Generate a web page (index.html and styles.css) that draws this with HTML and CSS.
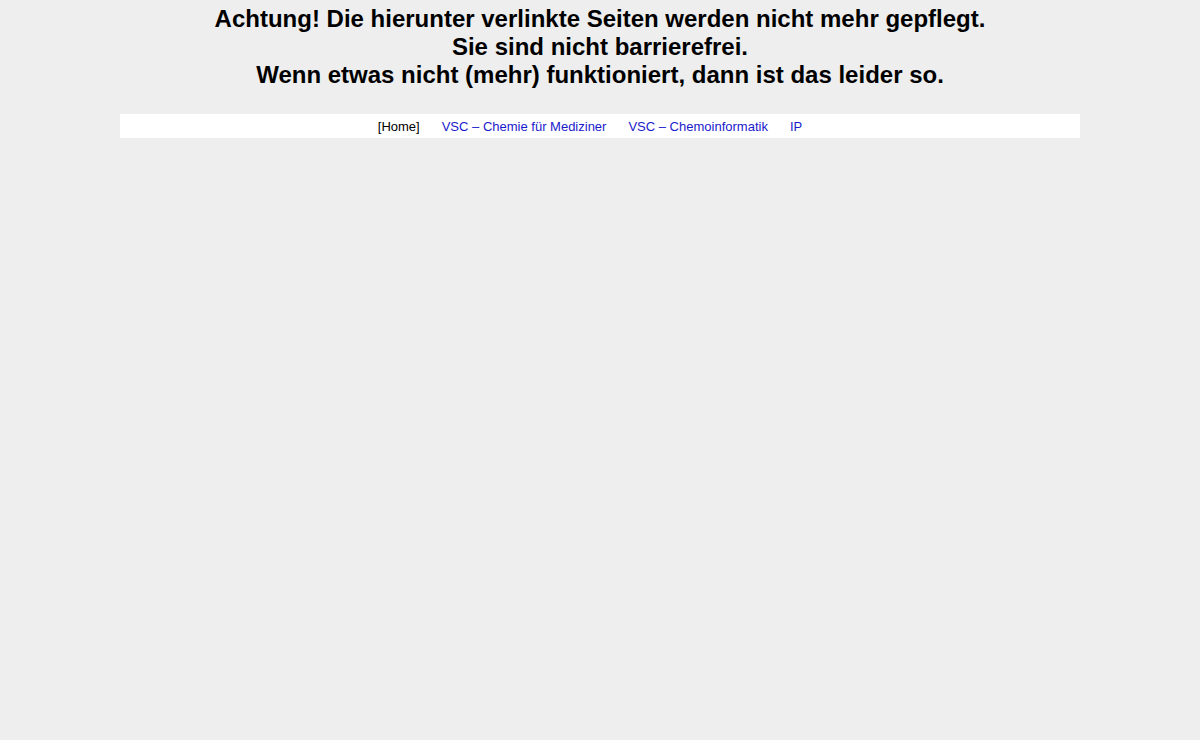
FILE: index.html
```html
<!DOCTYPE html>
<html lang="de">
<head>
<meta charset="utf-8">
<title>Startseite</title>
<link rel="stylesheet" href="styles.css">
</head>
<body>
<div class="notice">
Achtung! Die hierunter verlinkte Seiten werden nicht mehr gepflegt.<br>
Sie sind nicht barrierefrei.<br>
Wenn etwas nicht (mehr) funktioniert, dann ist das leider so.
</div>
<nav class="nav">
  <span class="item current">[Home]</span>
  <a class="item" href="#">VSC – Chemie für Mediziner</a>
  <a class="item" href="#">VSC – Chemoinformatik</a>
  <a class="item" href="#">IP</a>
</nav>
</body>
</html>
```
FILE: styles.css
```css
html, body {
  margin: 0;
  padding: 0;
  background: #eeeeee;
  font-family: "Liberation Sans", Arial, sans-serif;
}
.notice {
  text-align: center;
  font-weight: bold;
  font-size: 24px;
  line-height: 28px;
  color: #000;
  padding-top: 5px;
}
.nav {
  width: 960px;
  margin: 25px auto 0;
  background: #fff;
  height: 24px;
  display: flex;
  justify-content: center;
  align-items: center;
  padding-right: 20px;
  box-sizing: border-box;
  font-size: 13px;
  gap: 22px;
}
.item {
  color: #1a1acc;
  text-decoration: none;
}
.item.current {
  color: #000;
}
```
